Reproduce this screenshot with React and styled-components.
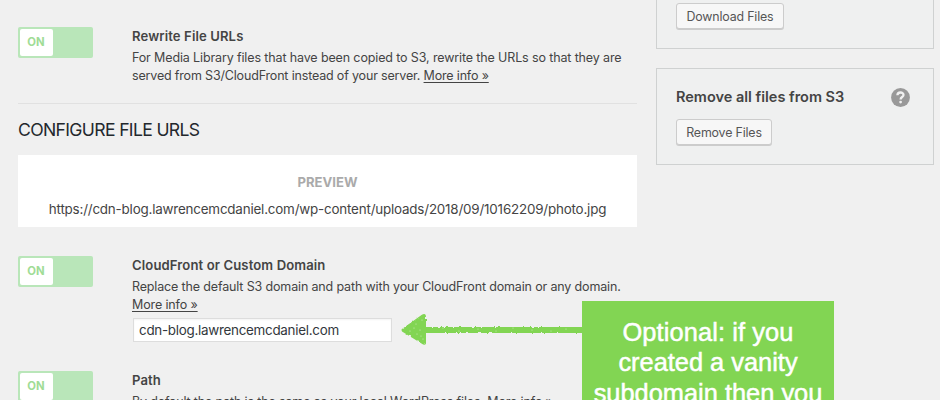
import React from "react";
import styled, { createGlobalStyle } from "styled-components";

const GlobalStyle = createGlobalStyle`
  html, body { margin: 0; padding: 0; background: #f0f0f0; overflow: hidden; }
  * { box-sizing: border-box; }
`;

const Page = styled.div`
  position: relative;
  width: 940px;
  height: 400px;
  overflow: hidden;
  display: grid;
  grid-template-columns: 619px 278px;
  column-gap: 19px;
  padding-left: 18px;
  background: #f0f0f0;
  color: #444;
  font-family: Inter, "Liberation Sans", sans-serif;
  font-size: 12.5px;
`;

const Main = styled.main`
  display: flex;
  flex-direction: column;
  padding-top: 27px;
`;

const Setting = styled.section`
  display: grid;
  grid-template-columns: 75px 1fr;
  column-gap: 39px;
  align-items: start;
  flex: none;
  height: ${(p) => p.$height}px;
`;

const Track = styled.div`
  width: 75px;
  height: 31px;
  padding: 2px;
  border-radius: 2px;
  background: #b9e6b9;
`;

const Knob = styled.div`
  width: 33px;
  height: 27px;
  padding-right: 1px;
  border-radius: 2px;
  background: #fff;
  color: #a0dc96;
  font-size: 11.3px;
  font-weight: 700;
  line-height: 27px;
  text-align: center;
`;

const SettingTitle = styled.h3`
  margin: 0 0 4px;
  font-size: 13.1px;
  font-weight: 600;
  line-height: 18px;
  white-space: nowrap;
  letter-spacing: 0.11px;
`;

const Line = styled.div`
  line-height: 18px;
  white-space: nowrap;
  letter-spacing: ${(p) => p.$track || 0}px;
`;

const Link = styled.a`
  color: #444;
  text-decoration: underline;
  text-underline-offset: 2px;
  text-decoration-thickness: 1px;
`;

const Heading = styled.h2`
  margin: 0;
  height: 52px;
  flex: none;
  border-top: 1px solid #e1e1e1;
  color: #23282d;
  font-size: 17.6px;
  font-weight: 400;
  line-height: 52px;
  letter-spacing: -0.66px;
`;

const Preview = styled.div`
  height: 72px;
  flex: none;
  margin-bottom: 29px;
  padding-top: 17px;
  background: #fff;
  text-align: center;
`;

const PreviewTitle = styled.div`
  color: #aaa;
  font-size: 13.1px;
  font-weight: 700;
  line-height: 20px;
`;

const PreviewUrl = styled.div`
  margin-top: 7px;
  font-size: 13.4px;
  line-height: 20px;
  white-space: nowrap;
  letter-spacing: -0.19px;
`;

const DomainInput = styled.input`
  display: block;
  width: 259px;
  height: 24px;
  margin: 4px 0 0 1px;
  padding: 0 5px 0 5px;
  border: 1px solid #ddd;
  border-radius: 0;
  outline: 0;
  background: #fff;
  box-shadow: inset 0 1px 2px rgba(0, 0, 0, 0.05);
  color: #32373c;
  font-family: inherit;
  font-size: 13.4px;
  letter-spacing: -0.27px;
`;

const Sidebar = styled.aside`
  display: flex;
  flex-direction: column;
  gap: 19px;
  height: 166px;
`;

const Panel = styled.section`
  width: 278px;
  height: ${(p) => p.$height}px;
  padding: ${(p) => p.$top}px 19px 0;
  border: 1px solid #cfd1d1;
  ${(p) => p.$cut && "border-top: 0;"}
  background: #eff0f0;
`;

const PanelHeader = styled.div`
  display: flex;
  align-items: center;
  justify-content: space-between;
  height: 20px;
  margin-bottom: 12px;
  padding-right: 4px;
`;

const PanelTitle = styled.h3`
  margin: 0;
  font-size: 14.5px;
  font-weight: 600;
  line-height: 18px;
  padding-bottom: 1px;
  white-space: nowrap;
`;

const Button = styled.button`
  display: block;
  width: ${(p) => p.$width}px;
  height: 26px;
  padding: 0;
  border: 1px solid #ccc;
  border-radius: 3px;
  background: #f7f7f7;
  box-shadow: 0 1px 0 #ccc;
  color: #555;
  font-family: inherit;
  font-size: 12.4px;
  line-height: 25px;
  text-align: center;
  white-space: nowrap;
  letter-spacing: -0.17px;
`;

const Callout = styled.div`
  position: absolute;
  left: 582px;
  top: 301px;
  width: 252px;
  height: 110px;
  padding-top: 16px;
  background: #82d553;
  color: #fff;
  font-family: "Liberation Sans", Arial, sans-serif;
  font-size: 25.4px;
  line-height: 30.4px;
  text-align: center;
  -webkit-text-stroke: 0.5px #fff;
`;

const CalloutLine = styled.div`
  white-space: nowrap;
  letter-spacing: ${(p) => p.$track || 0}px;
`;

const ArrowSvg = styled.svg`
  position: absolute;
  left: 395px;
  top: 308px;
`;

const Toggle = () => (
  <Track>
    <Knob>ON</Knob>
  </Track>
);

const specks = [
  [21, 16], [25, 22], [27, 12], [22, 26], [15, 23], [28, 31], [26, 28], [19, 20],
  [48, 20], [64, 23], [83, 21], [101, 23], [118, 20], [137, 22], [156, 23], [171, 21],
];

const Arrow = () => (
  <ArrowSvg width="190" height="44" viewBox="0 0 190 44" aria-hidden="true">
    <defs>
      <filter id="chalk" filterUnits="userSpaceOnUse" x="0" y="0" width="190" height="44">
        <feTurbulence type="fractalNoise" baseFrequency="0.35" numOctaves="2" seed="4" result="n" />
        <feDisplacementMap in="SourceGraphic" in2="n" scale="2.8" xChannelSelector="R" yChannelSelector="G" />
      </filter>
    </defs>
    <g filter="url(#chalk)" fill="#82d553">
      <path d="M6.3 21.5 L26.5 7 Q31 4.5 31 9 V19 H190 V25 H31 V35.5 Q30 38 26.5 35.5 L7 23.5 Z" />
    </g>
    {specks.map(([x, y]) => (
      <circle key={x + "-" + y} cx={x} cy={y} r="0.55" fill="#cdeebb" />
    ))}
  </ArrowSvg>
);

const Help = () => (
  <svg width="19" height="19" viewBox="0 0 19 19" aria-label="Help">
    <circle cx="9.5" cy="9.5" r="9.4" fill="#999" />
    <path
      d="M6.4 7.2 C6.5 3.6 12.6 3.7 12.5 7 C12.4 9.1 9.6 8.9 9.6 11.4"
      fill="none"
      stroke="#f0f0f0"
      strokeWidth="2.3"
    />
    <circle cx="9.6" cy="14.1" r="1.4" fill="#f0f0f0" />
  </svg>
);

export default function App() {
  return (
    <>
      <GlobalStyle />
      <Page>
        <Main>
          <Setting $height={76}>
            <Toggle />
            <div>
              <SettingTitle>Rewrite File URLs</SettingTitle>
              <Line $track={-0.13}>
                For Media Library files that have been copied to S3, rewrite the URLs so that they are
              </Line>
              <Line $track={-0.17}>
                served from S3/CloudFront instead of your server. <Link>More info »</Link>
              </Line>
            </div>
          </Setting>
          <Heading>CONFIGURE FILE URLS</Heading>
          <Preview>
            <PreviewTitle>PREVIEW</PreviewTitle>
            <PreviewUrl>https://cdn-blog.lawrencemcdaniel.com/wp-content/uploads/2018/09/10162209/photo.jpg</PreviewUrl>
          </Preview>
          <Setting $height={115}>
            <Toggle />
            <div>
              <SettingTitle>CloudFront or Custom Domain</SettingTitle>
              <Line $track={-0.15}>
                Replace the default S3 domain and path with your CloudFront domain or any domain.
              </Line>
              <Line $track={-0.13}>
                <Link>More info »</Link>
              </Line>
              <DomainInput defaultValue="cdn-blog.lawrencemcdaniel.com" />
            </div>
          </Setting>
          <Setting $height={60}>
            <Toggle />
            <div>
              <SettingTitle>Path</SettingTitle>
              <Line $track={-0.14}>
                By default the path is the same as your local WordPress files. <Link>More info »</Link>
              </Line>
            </div>
          </Setting>
        </Main>
        <Sidebar>
          <Panel $height={49} $top={3} $cut>
            <Button $width={108}>Download Files</Button>
          </Panel>
          <Panel $height={97} $top={18}>
            <PanelHeader>
              <PanelTitle>Remove all files from S3</PanelTitle>
              <Help />
            </PanelHeader>
            <Button $width={96}>Remove Files</Button>
          </Panel>
        </Sidebar>
        <Arrow />
        <Callout>
          <CalloutLine $track={0.1}>Optional: if you</CalloutLine>
          <CalloutLine>created a vanity</CalloutLine>
          <CalloutLine>subdomain then you</CalloutLine>
        </Callout>
      </Page>
    </>
  );
}
